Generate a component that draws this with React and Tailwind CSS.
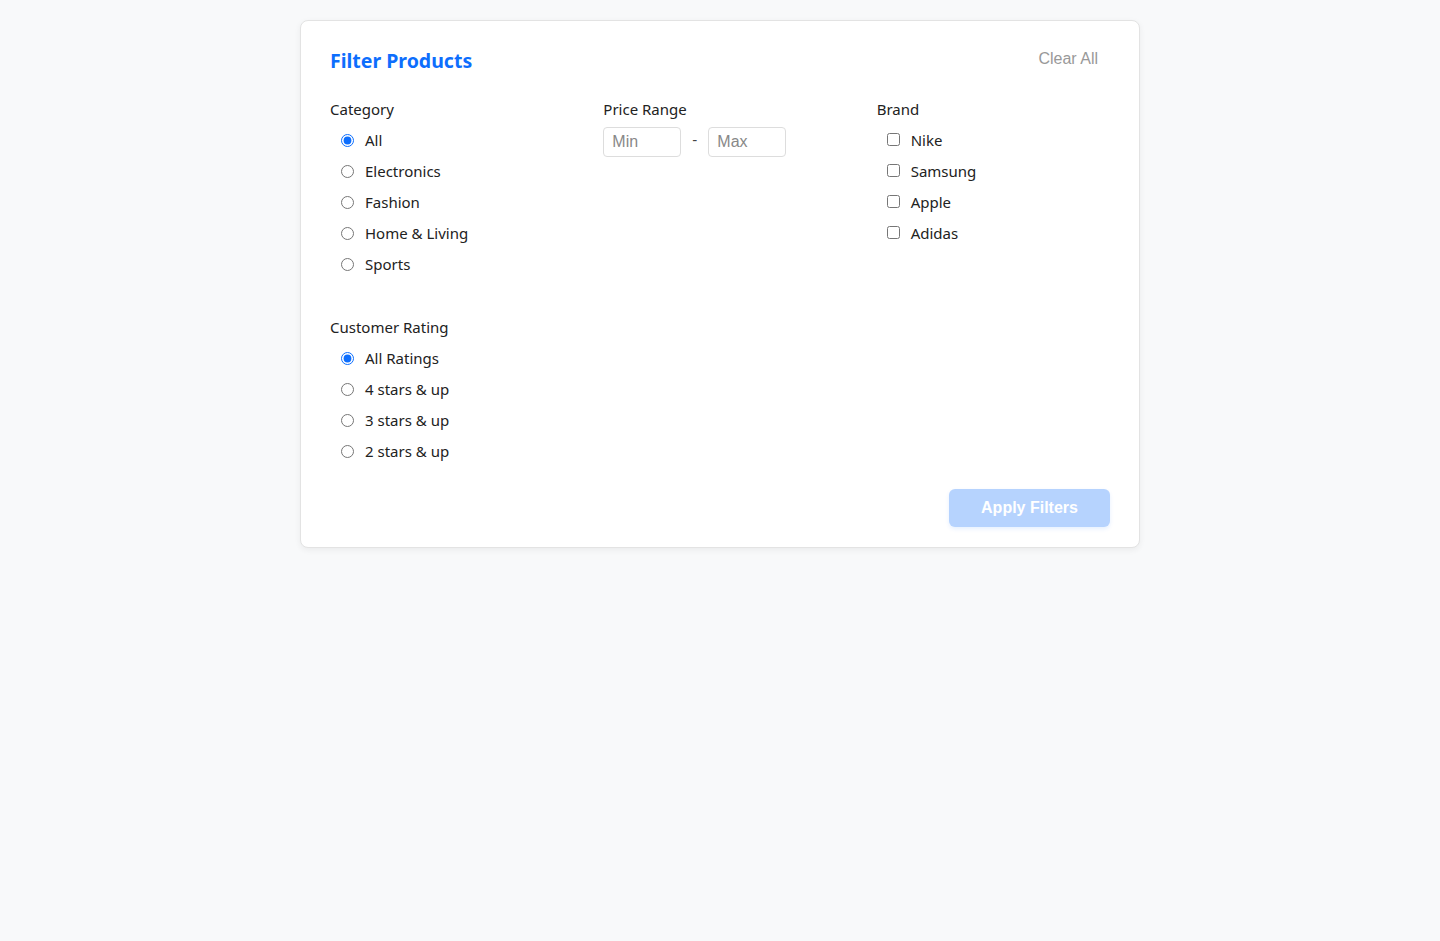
import React, { useState } from 'react'

const categories = ['All', 'Electronics', 'Fashion', 'Home & Living', 'Sports']
const ratings = ['All Ratings', '4 stars & up', '3 stars & up', '2 stars & up']
const brands = ['Nike', 'Samsung', 'Apple', 'Adidas']

function Section({ title, children }) {
  return (
    <div>
      <h3 className="text-[15px] leading-6 font-normal text-[#222] mb-[7px]">{title}</h3>
      <div className="flex flex-col gap-[7px] pl-[6px]">{children}</div>
    </div>
  )
}

function Option({ type, name, label, checked, onChange }) {
  const box = type === 'checkbox'
    ? 'w-[13px] h-[13px] m-0 ml-[4px] mr-[11px] -mt-[2px] accent-[#0d6efd]'
    : 'w-[13px] h-[13px] m-0 ml-[5px] mr-[11px] accent-[#0d6efd]'
  return (
    <label className="flex items-center h-6 text-[15px] text-[#222] cursor-pointer">
      <input type={type} name={name} checked={checked} onChange={onChange} className={box} />
      <span>{label}</span>
    </label>
  )
}

export default function App() {
  const [category, setCategory] = useState('All')
  const [rating, setRating] = useState('All Ratings')
  const [picked, setPicked] = useState([])

  const toggleBrand = (b) =>
    setPicked(p => (p.includes(b) ? p.filter(x => x !== b) : [...p, b]))

  return (
    <div className="min-h-screen bg-[#f8f9fa] pt-5 font-['Noto_Sans',sans-serif]">
      <div className="w-[840px] mx-auto bg-white border border-[#e3e3e3] rounded-lg shadow-[0_2px_6px_rgba(0,0,0,0.06)] px-[29px] pt-[28px] pb-5">
        {/* header */}
        <div className="flex items-center justify-between h-[26px] mb-[22px]">
          <h2 className="text-[19.5px] font-bold text-[#0d6efd] leading-[26px] -mt-[2px]">Filter Products</h2>
          <button className="px-3 text-[16px] text-[#999] font-['Liberation_Sans',Arial,sans-serif] -mt-[6px]">
            Clear All
          </button>
        </div>

        {/* filters */}
        <div className="grid grid-cols-3 gap-x-10 gap-y-[39px]">
          <Section title="Category">
            {categories.map(c => (
              <Option key={c} type="radio" name="category" label={c} checked={category === c} onChange={() => setCategory(c)} />
            ))}
          </Section>

          <div>
            <h3 className="text-[15px] leading-6 text-[#222] mb-[6px]">Price Range</h3>
            <div className="flex items-center gap-[11px] font-['Liberation_Sans',Arial,sans-serif]">
              <input
                placeholder="Min"
                className="w-[78px] h-[30px] border border-[#ddd] rounded px-2 text-[16px] text-[#333] placeholder-[#888] outline-none"
              />
              <span className="text-[#444] text-[15px] -mt-1">-</span>
              <input
                placeholder="Max"
                className="w-[78px] h-[30px] border border-[#ddd] rounded px-2 text-[16px] text-[#333] placeholder-[#888] outline-none"
              />
            </div>
          </div>

          <Section title="Brand">
            {brands.map(b => (
              <Option key={b} type="checkbox" name="brand" label={b} checked={picked.includes(b)} onChange={() => toggleBrand(b)} />
            ))}
          </Section>

          <Section title="Customer Rating">
            {ratings.map(r => (
              <Option key={r} type="radio" name="rating" label={r} checked={rating === r} onChange={() => setRating(r)} />
            ))}
          </Section>
        </div>

        {/* footer */}
        <div className="flex justify-end mt-[26px]">
          <button
            disabled
            className="w-[161px] h-[38px] rounded-md bg-[#b6d3fe] text-white font-bold text-[16px] font-['Liberation_Sans',Arial,sans-serif] shadow-[0_2px_4px_rgba(13,110,253,0.1)]"
          >
            Apply Filters
          </button>
        </div>
      </div>
    </div>
  )
}
